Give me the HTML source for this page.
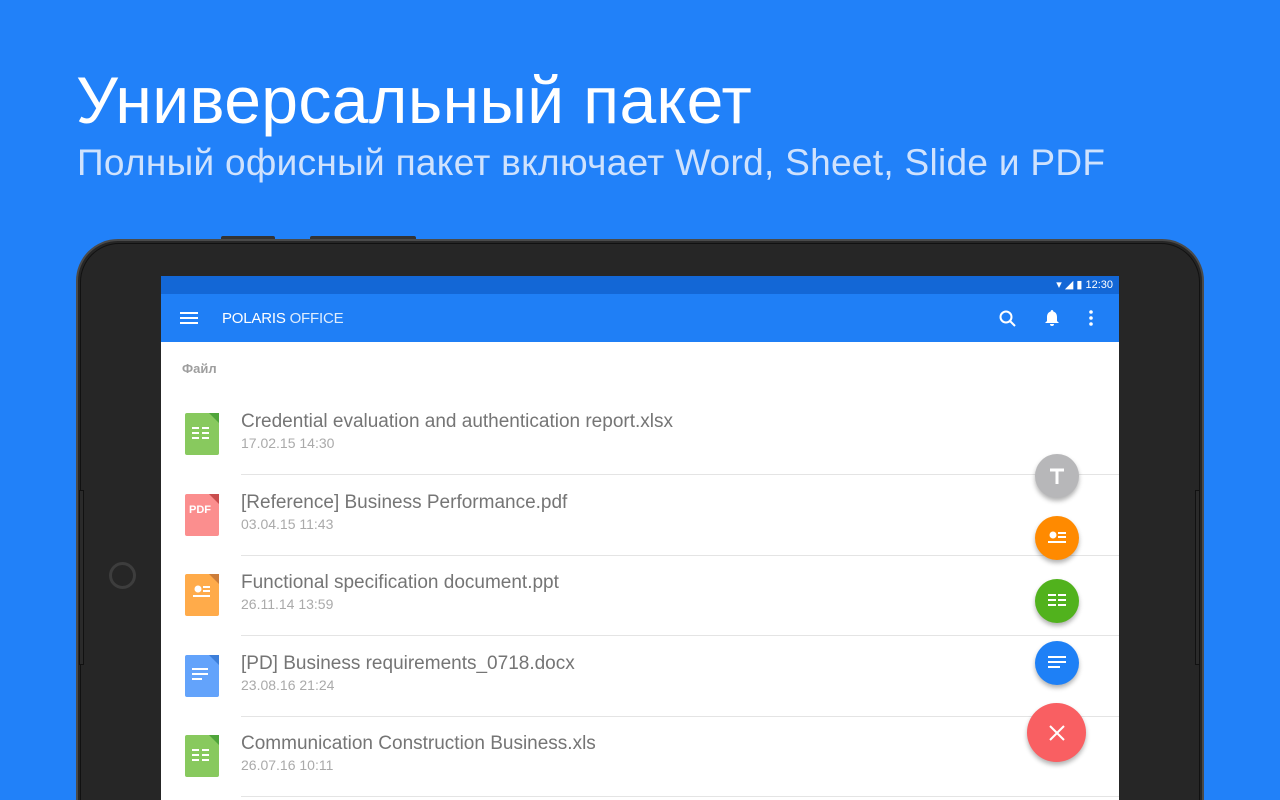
<!DOCTYPE html>
<html style="width:1280px;height:800px;overflow:hidden"><head><meta charset="utf-8"><style>
*{margin:0;padding:0;box-sizing:border-box}
body{width:1280px;height:800px;overflow:hidden;background:#2181f9;font-family:"Liberation Sans","DejaVu Sans",sans-serif;position:relative}
.h1{position:absolute;left:76px;top:62px;color:#fff;font-size:66px;white-space:nowrap;letter-spacing:0.4px}
.h2{position:absolute;left:77px;top:142px;color:#cfe2fd;font-size:37px;white-space:nowrap;letter-spacing:0.3px}
.btn{position:absolute;top:236px;height:6px;background:#333;border-radius:2px 2px 0 0}
.frame{position:absolute;left:76px;top:239px;width:1128px;height:561px;background:#262626;border:2px solid #4a4a4a;border-bottom:0;border-radius:42px 42px 0 0}
.frame:after{content:"";position:absolute;left:2px;top:2px;right:2px;bottom:0;border:1px solid #111;border-bottom:0;border-radius:39px 39px 0 0}
.side{position:absolute;width:5px;height:175px;top:490px;border:1px solid #111;background:#2a2a2a}
.home{position:absolute;left:109px;top:562px;width:27px;height:27px;border:3px solid #3d3d3d;border-radius:50%}
.screen{position:absolute;left:161px;top:276px;width:958px;height:524px;background:#fff;overflow:hidden}
.status{height:18px;background:#1367d6;color:#fff;font-size:11px;text-align:right;padding-right:6px;line-height:18px}
.bar{height:48px;background:#1f7ff6;position:relative;color:#fff}
.ham{position:absolute;left:19px;top:18px;width:18px;height:12px;border-top:2px solid #fff;border-bottom:2px solid #fff}
.ham:after{content:"";position:absolute;left:0;top:3px;width:18px;height:2px;background:#fff}
.title{position:absolute;left:61px;top:16px;font-size:15px;letter-spacing:-0.2px}
.sec{position:absolute;left:21px;top:85px;font-size:13px;font-weight:bold;color:#9e9e9e}
.row{position:absolute;left:0;width:958px;height:81px}
.row .t{position:absolute;left:80px;top:0;font-size:19px;color:#757575;white-space:nowrap}
.row .d{position:absolute;left:80px;top:24px;font-size:14px;color:#aaa}
.row .ln{position:absolute;left:80px;right:0;top:63px;height:1px;background:#e4e4e4}
.ic{position:absolute;left:24px;top:2px;width:34px;height:42px;border-radius:2px}
.fold{position:absolute;right:0;top:0;width:0;height:0;border-style:solid;border-width:0 10px 10px 0}
.fab{position:absolute;border-radius:50%;box-shadow:0 3px 5px rgba(0,0,0,.3);display:flex;align-items:center;justify-content:center}
</style></head><body>
<div class="h1">Универсальный пакет</div>
<div class="h2">Полный офисный пакет включает Word, Sheet, Slide и PDF</div>
<div class="btn" style="left:221px;width:54px"></div>
<div class="btn" style="left:310px;width:106px"></div>
<div class="frame"></div>
<div class="side" style="left:79px"></div>
<div class="side" style="left:1195px"></div>
<div class="home"></div>
<div class="screen">
 <div class="status">▾ ◢ ▮ 12:30</div>
 <div class="bar"><div class="ham"></div><div class="title">POLARIS <span style="opacity:.85">OFFICE</span></div>
  <svg style="position:absolute;left:838px;top:16px" width="18" height="18" viewBox="0 0 18 18"><circle cx="7" cy="7" r="5.5" fill="none" stroke="#fff" stroke-width="2"/><path d="M11 11l5 5" stroke="#fff" stroke-width="2"/></svg>
  <svg style="position:absolute;left:883px;top:15px" width="16" height="18" viewBox="0 0 16 18"><path d="M8 1a1.3 1.3 0 0 1 1.3 1.5C12 3.3 13 5.5 13 8v4l2 2H1l2-2V8c0-2.5 1-4.7 3.7-5.5A1.3 1.3 0 0 1 8 1zM6 15h4a2 2 0 0 1-4 0z" fill="#fff"/></svg>
  <svg style="position:absolute;left:927px;top:15px" width="6" height="18"><circle cx="3" cy="3" r="1.8" fill="#fff"/><circle cx="3" cy="9" r="1.8" fill="#fff"/><circle cx="3" cy="15" r="1.8" fill="#fff"/></svg>
 </div>
 <div class="sec">Файл</div>

 <div class="row" style="top:135px"><div class="ic" style="background:#88c95e"><div class="fold" style="border-color:transparent #4fa53a transparent transparent"></div><svg style="position:absolute;left:7px;top:14px" width="18" height="14"><path d="M0 1h7M10 1h7M0 6h7M10 6h7M0 11h7M10 11h7" stroke="#fff" stroke-width="2"/></svg></div><div class="t">Credential evaluation and authentication report.xlsx</div><div class="d">17.02.15 14:30</div><div class="ln"></div></div>
 <div class="row" style="top:216px"><div class="ic" style="background:#fb8e8e"><div class="fold" style="border-color:transparent #c94d4d transparent transparent"></div><div style="position:absolute;left:4px;top:10px;color:#fff;font-size:11px;font-weight:bold">PDF</div></div><div class="t">[Reference] Business Performance.pdf</div><div class="d">03.04.15 11:43</div><div class="ln"></div></div>
 <div class="row" style="top:296px"><div class="ic" style="background:#ffab4a"><div class="fold" style="border-color:transparent #cc7d3a transparent transparent"></div><svg style="position:absolute;left:8px;top:11px" width="18" height="14"><circle cx="5" cy="4" r="3.5" fill="#fff"/><path d="M10 2h7M10 6h7M0 11h17" stroke="#fff" stroke-width="2"/></svg></div><div class="t">Functional specification document.ppt</div><div class="d">26.11.14 13:59</div><div class="ln"></div></div>
 <div class="row" style="top:377px"><div class="ic" style="background:#63a3fb"><div class="fold" style="border-color:transparent #3d7fd9 transparent transparent"></div><svg style="position:absolute;left:7px;top:13px" width="18" height="14"><path d="M0 1h16M0 6h16M0 11h10" stroke="#fff" stroke-width="2"/></svg></div><div class="t">[PD] Business requirements_0718.docx</div><div class="d">23.08.16 21:24</div><div class="ln"></div></div>
 <div class="row" style="top:457px"><div class="ic" style="background:#88c95e"><div class="fold" style="border-color:transparent #4fa53a transparent transparent"></div><svg style="position:absolute;left:7px;top:14px" width="18" height="14"><path d="M0 1h7M10 1h7M0 6h7M10 6h7M0 11h7M10 11h7" stroke="#fff" stroke-width="2"/></svg></div><div class="t">Communication Construction Business.xls</div><div class="d">26.07.16 10:11</div><div class="ln"></div></div>
</div>
<div class="fab" style="left:1035px;top:454px;width:44px;height:44px;background:#b7b7b9"><svg width="16" height="16"><path d="M1 2h14M8 2v14" stroke="#fff" stroke-width="3"/></svg></div>
<div class="fab" style="left:1035px;top:516px;width:44px;height:44px;background:#ff8a00"><svg width="18" height="14"><circle cx="5" cy="4" r="3.5" fill="#fff"/><path d="M10 2h8M10 6h8M0 11h18" stroke="#fff" stroke-width="2"/></svg></div>
<div class="fab" style="left:1035px;top:579px;width:44px;height:44px;background:#51b21d"><svg width="18" height="14"><path d="M0 1h8M10 1h8M0 6h8M10 6h8M0 11h8M10 11h8" stroke="#fff" stroke-width="2"/></svg></div>
<div class="fab" style="left:1035px;top:641px;width:44px;height:44px;background:#1e80f6"><svg width="18" height="14"><path d="M0 1h18M0 6h18M0 11h12" stroke="#fff" stroke-width="2"/></svg></div>
<div class="fab" style="left:1027px;top:703px;width:59px;height:59px;background:#f95f62"><svg width="16" height="16"><path d="M1 1l14 14M15 1L1 15" stroke="#fff" stroke-width="2"/></svg></div>
</body></html>
